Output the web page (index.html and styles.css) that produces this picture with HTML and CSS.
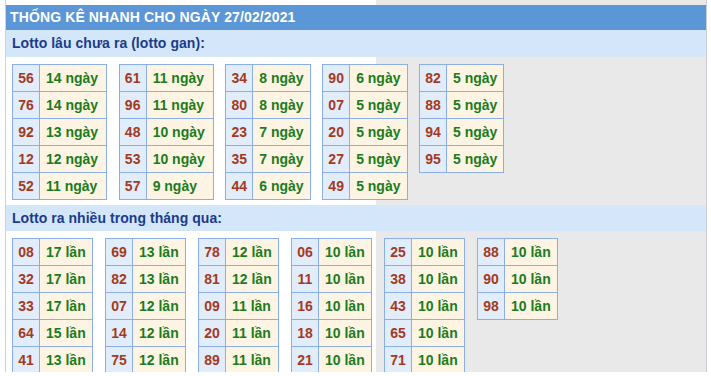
FILE: index.html
```html
<!DOCTYPE html>
<html lang="vi">
<head>
<meta charset="utf-8">
<title>Thống kê nhanh</title>
<link rel="stylesheet" href="styles.css">
</head>
<body>
<div class="box">
  <div class="title">THỐNG KÊ NHANH CHO NGÀY 27/02/2021</div>
  <div class="band band-1">Lotto lâu chưa ra (lotto gan):</div>
  <div class="tables tables-1">
    <table class="t wide"><tr><td class="n">56</td><td class="v">14 ngày</td></tr><tr><td class="n">76</td><td class="v">14 ngày</td></tr><tr><td class="n">92</td><td class="v">13 ngày</td></tr><tr><td class="n">12</td><td class="v">12 ngày</td></tr><tr><td class="n">52</td><td class="v">11 ngày</td></tr></table>
    <table class="t wide"><tr><td class="n">61</td><td class="v">11 ngày</td></tr><tr><td class="n">96</td><td class="v">11 ngày</td></tr><tr><td class="n">48</td><td class="v">10 ngày</td></tr><tr><td class="n">53</td><td class="v">10 ngày</td></tr><tr><td class="n">57</td><td class="v">9 ngày</td></tr></table>
    <table class="t"><tr><td class="n">34</td><td class="v">8 ngày</td></tr><tr><td class="n">80</td><td class="v">8 ngày</td></tr><tr><td class="n">23</td><td class="v">7 ngày</td></tr><tr><td class="n">35</td><td class="v">7 ngày</td></tr><tr><td class="n">44</td><td class="v">6 ngày</td></tr></table>
    <table class="t"><tr><td class="n">90</td><td class="v">6 ngày</td></tr><tr><td class="n">07</td><td class="v">5 ngày</td></tr><tr><td class="n">20</td><td class="v">5 ngày</td></tr><tr><td class="n">27</td><td class="v">5 ngày</td></tr><tr><td class="n">49</td><td class="v">5 ngày</td></tr></table>
    <table class="t"><tr><td class="n">82</td><td class="v">5 ngày</td></tr><tr><td class="n">88</td><td class="v">5 ngày</td></tr><tr><td class="n">94</td><td class="v">5 ngày</td></tr><tr><td class="n">95</td><td class="v">5 ngày</td></tr></table>
  </div>
  <div class="band band-2">Lotto ra nhiều trong tháng qua:</div>
  <div class="tables tables-2">
    <table class="t"><tr><td class="n">08</td><td class="v">17 lần</td></tr><tr><td class="n">32</td><td class="v">17 lần</td></tr><tr><td class="n">33</td><td class="v">17 lần</td></tr><tr><td class="n">64</td><td class="v">15 lần</td></tr><tr><td class="n">41</td><td class="v">13 lần</td></tr></table>
    <table class="t"><tr><td class="n">69</td><td class="v">13 lần</td></tr><tr><td class="n">82</td><td class="v">13 lần</td></tr><tr><td class="n">07</td><td class="v">12 lần</td></tr><tr><td class="n">14</td><td class="v">12 lần</td></tr><tr><td class="n">75</td><td class="v">12 lần</td></tr></table>
    <table class="t"><tr><td class="n">78</td><td class="v">12 lần</td></tr><tr><td class="n">81</td><td class="v">12 lần</td></tr><tr><td class="n">09</td><td class="v">11 lần</td></tr><tr><td class="n">20</td><td class="v">11 lần</td></tr><tr><td class="n">89</td><td class="v">11 lần</td></tr></table>
    <table class="t"><tr><td class="n">06</td><td class="v">10 lần</td></tr><tr><td class="n">11</td><td class="v">10 lần</td></tr><tr><td class="n">16</td><td class="v">10 lần</td></tr><tr><td class="n">18</td><td class="v">10 lần</td></tr><tr><td class="n">21</td><td class="v">10 lần</td></tr></table>
    <table class="t"><tr><td class="n">25</td><td class="v">10 lần</td></tr><tr><td class="n">38</td><td class="v">10 lần</td></tr><tr><td class="n">43</td><td class="v">10 lần</td></tr><tr><td class="n">65</td><td class="v">10 lần</td></tr><tr><td class="n">71</td><td class="v">10 lần</td></tr></table>
    <table class="t"><tr><td class="n">88</td><td class="v">10 lần</td></tr><tr><td class="n">90</td><td class="v">10 lần</td></tr><tr><td class="n">98</td><td class="v">10 lần</td></tr></table>
  </div>
</div>
</body>
</html>
```
FILE: styles.css
```css
html, body {
  margin: 0;
  padding: 0;
  background: #ffffff;
}
body {
  font-family: "Liberation Sans", Arial, sans-serif;
  font-size: 14px;
  font-weight: bold;
}
.box {
  margin-left: 5px;
  width: 702px;
  height: 372px;
  overflow: hidden;
  padding-top: 5px;
  box-sizing: border-box;
  border-left: 1px solid #d2d2d2;
  border-right: 1px solid #c9cdd3;
  background: linear-gradient(to right, #ffffff 0, #ffffff 370px, #e9e9e9 370px, #e9e9e9 100%);
}
.title {
  height: 25px;
  line-height: 25px;
  padding-left: 4px;
  background: #5b96d6;
  color: #ffffff;
  letter-spacing: 0.12px;
}
.band {
  padding-left: 6px;
  background: #d4e7fa;
  color: #1b3b8b;
  letter-spacing: 0.05px;
}
.band-1 {
  height: 27px;
  line-height: 27px;
}
.band-2 {
  height: 26px;
  line-height: 26px;
}
.tables {
  display: flex;
  align-items: flex-start;
  padding: 7px 6px 5px 6px;
}
.tables-1 {
  gap: 11.5px;
}
.tables-2 {
  gap: 12.3px;
  padding-bottom: 0;
}
.t {
  border-collapse: separate;
  border-spacing: 0;
  border-top: 1px solid #8caee6;
  border-left: 1px solid #8caee6;
  flex: none;
}
.t td {
  border-right: 1px solid #8caee6;
  border-bottom: 1px solid #8caee6;
  line-height: 26px;
  padding: 0 6px;
  white-space: nowrap;
}
.t td.n {
  width: 27px;
  box-sizing: border-box;
  padding: 0;
  text-align: center;
  background: #e2edfc;
  color: #a43a1d;
}
.t td.v {
  background: #fef4e4;
  color: #1b7c1b;
}
.t.wide td.v {
  padding-right: 8px;
}
```
